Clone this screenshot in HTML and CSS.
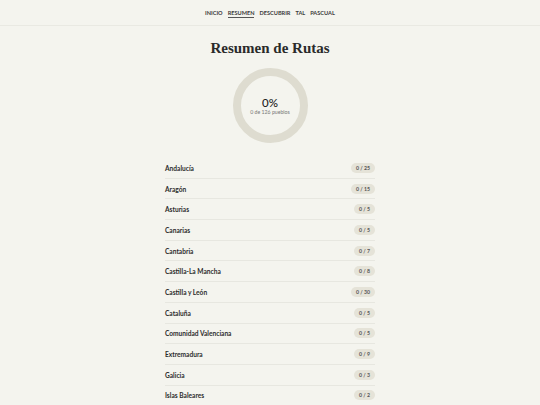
FILE: index.html
```html
<!DOCTYPE html>
<html lang="es">
<head>
<meta charset="utf-8">
<title>Resumen de Rutas</title>
<link rel="stylesheet" href="styles.css">
</head>
<body>
<header class="topbar">
  <nav class="nav">
    <a class="nav-link" href="#">INICIO</a>
    <a class="nav-link active" href="#">RESUMEN</a>
    <a class="nav-link" href="#">DESCUBRIR</a>
    <a class="nav-link" href="#">TAL</a>
    <a class="nav-link" href="#">PASCUAL</a>
  </nav>
</header>
<main class="main">
  <h1 class="title">Resumen de Rutas</h1>
  <div class="ring">
    <div class="ring-inner">
      <div class="pct">0%</div>
      <div class="pct-sub">0 de 126 pueblos</div>
    </div>
  </div>
  <ul class="list">
    <li class="row"><span class="name">Andalucía</span><span class="badge">0 / 25</span></li>
    <li class="row"><span class="name">Aragón</span><span class="badge">0 / 15</span></li>
    <li class="row"><span class="name">Asturias</span><span class="badge">0 / 5</span></li>
    <li class="row"><span class="name">Canarias</span><span class="badge">0 / 5</span></li>
    <li class="row"><span class="name">Cantabria</span><span class="badge">0 / 7</span></li>
    <li class="row"><span class="name">Castilla-La Mancha</span><span class="badge">0 / 8</span></li>
    <li class="row"><span class="name">Castilla y León</span><span class="badge">0 / 30</span></li>
    <li class="row"><span class="name">Cataluña</span><span class="badge">0 / 5</span></li>
    <li class="row"><span class="name">Comunidad Valenciana</span><span class="badge">0 / 5</span></li>
    <li class="row"><span class="name">Extremadura</span><span class="badge">0 / 9</span></li>
    <li class="row"><span class="name">Galicia</span><span class="badge">0 / 3</span></li>
    <li class="row"><span class="name">Islas Baleares</span><span class="badge">0 / 2</span></li>
  </ul>
</main>
</body>
</html>
```
FILE: styles.css
```css
* { box-sizing: border-box; }
html, body {
  margin: 0;
  padding: 0;
  background: #f4f4ee;
  font-family: Lato, "Open Sans", sans-serif;
  color: #2a2a2a;
}
body {
  height: 405px;
  overflow: hidden;
}
.topbar {
  height: 26px;
  border-bottom: 1px solid #e9e9e2;
  display: flex;
  justify-content: center;
  align-items: flex-start;
}
.nav {
  display: flex;
  gap: 5px;
  padding-top: 10px;
}
.nav-link {
  font-size: 5.6px;
  font-weight: 700;
  color: #3a3a3a;
  text-decoration: none;
  letter-spacing: 0;
  padding-bottom: 1px;
  border-bottom: 0.7px solid transparent;
  line-height: 6px;
}
.nav-link.active {
  border-bottom-color: #555;
}
.main {
  display: flex;
  flex-direction: column;
  align-items: center;
}
.title {
  margin: 13px 0 0;
  font-family: "Liberation Serif", "DejaVu Serif", serif;
  font-weight: 700;
  font-size: 15px;
  line-height: 18px;
  color: #2a2a2a;
}
.ring {
  margin-top: 11px;
  width: 75px;
  height: 75px;
  border-radius: 50%;
  border: 8px solid #dedcd0;
  display: flex;
  align-items: center;
  justify-content: center;
}
.ring-inner {
  display: flex;
  flex-direction: column;
  align-items: center;
  margin-top: 1px;
}
.pct {
  font-size: 11.5px;
  font-weight: 500;
  line-height: 12px;
  color: #222;
}
.pct-sub {
  font-size: 5.2px;
  color: #777;
  line-height: 6px;
}
.list {
  list-style: none;
  margin: 15px 0 0;
  padding: 0;
  width: 210px;
}
.row {
  height: 20.7px;
  display: flex;
  align-items: center;
  justify-content: space-between;
  border-bottom: 0.7px solid #e7e7e0;
}
.name {
  font-size: 6.6px;
  font-weight: 700;
  color: #2c2c2c;
}
.badge {
  font-size: 5.2px;
  font-weight: 700;
  color: #555;
  background: #e5e3d8;
  border-radius: 6px;
  padding: 2px 5px;
  line-height: 6px;
  white-space: pre;
}
```
